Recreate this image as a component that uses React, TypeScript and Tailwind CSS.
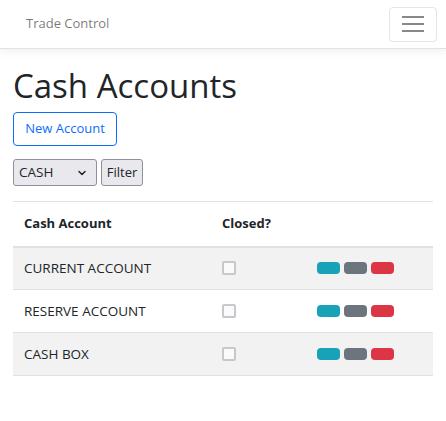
import { ChevronDown } from "lucide-react";

const accounts = ["CURRENT ACCOUNT", "RESERVE ACCOUNT", "CASH BOX"];

export default function App() {
  return (
    <div className="min-h-[421px] bg-white font-['Open_Sans',sans-serif] text-[#212529]">
      {/* navbar */}
      <nav className="relative flex h-[49px] items-center justify-between border-b border-[#dee2e6] pl-[26px] pr-[9px] shadow-[0_4px_8px_rgba(0,0,0,0.05)]">
        <span className="text-[13px] text-[rgba(0,0,0,0.55)]">Trade Control</span>
        <button className="flex h-[35px] w-[48px] flex-col items-center justify-center gap-[5px] rounded-[4px] border border-[rgba(0,0,0,0.1)]">
          <span className="block h-[2px] w-[22px] bg-[#888]" />
          <span className="block h-[2px] w-[22px] bg-[#888]" />
          <span className="block h-[2px] w-[22px] bg-[#888]" />
        </button>
      </nav>

      <main className="px-[13px] pt-[16px]">
        <h1 className="text-[33px] leading-[42px] font-normal">Cash Accounts</h1>

        <button className="mt-[5px] h-[34px] w-[104px] rounded-[4px] border border-[#0d6efd] text-[13px] text-[#0d6efd]">
          New Account
        </button>

        <div className="mt-[13px] flex gap-[4px]">
          <div className="relative flex h-[27px] w-[84px] items-center rounded-[3px] border border-[#8f8f9d] bg-[#e9e9ed] pl-[5px] text-[13.5px]">
            CASH
            <ChevronDown className="absolute right-[8px] h-[12px] w-[12px]" strokeWidth={3} />
          </div>
          <button className="h-[27px] w-[42px] rounded-[3px] border border-[#8f8f9d] bg-[#e9e9ed] text-[13px]">
            Filter
          </button>
        </div>

        <table className="mt-[15px] w-full table-fixed border-t border-[#dee2e6] text-[13.5px]">
          <colgroup>
            <col className="w-[209px]" />
            <col className="w-[95px]" />
            <col />
          </colgroup>
          <thead>
            <tr className="h-[45px] border-b-2 border-[#dee2e6] text-[13px]">
              <th className="pl-[11px] text-left font-bold">Cash Account</th>
              <th className="text-left font-bold">Closed?</th>
              <th />
            </tr>
          </thead>
          <tbody>
            {accounts.map((name, i) => (
              <tr
                key={name}
                className={`h-[43px] border-b border-[#dee2e6] ${i % 2 === 0 ? "bg-[#f2f2f2]" : "bg-white"}`}
              >
                <td className="pl-[11px]">{name}</td>
                <td>
                  <span className="block h-[14px] w-[14px] rounded-[2px] border-2 border-[#c8c8cc] bg-[#fafafa]" />
                </td>
                <td>
                  <div className="flex gap-[4px]">
                    <span className="h-[12px] w-[23px] rounded-[4px] bg-[#17a2b8]" />
                    <span className="h-[12px] w-[23px] rounded-[4px] bg-[#6c757d]" />
                    <span className="h-[12px] w-[23px] rounded-[4px] bg-[#dc3545]" />
                  </div>
                </td>
              </tr>
            ))}
          </tbody>
        </table>
      </main>
    </div>
  );
}
